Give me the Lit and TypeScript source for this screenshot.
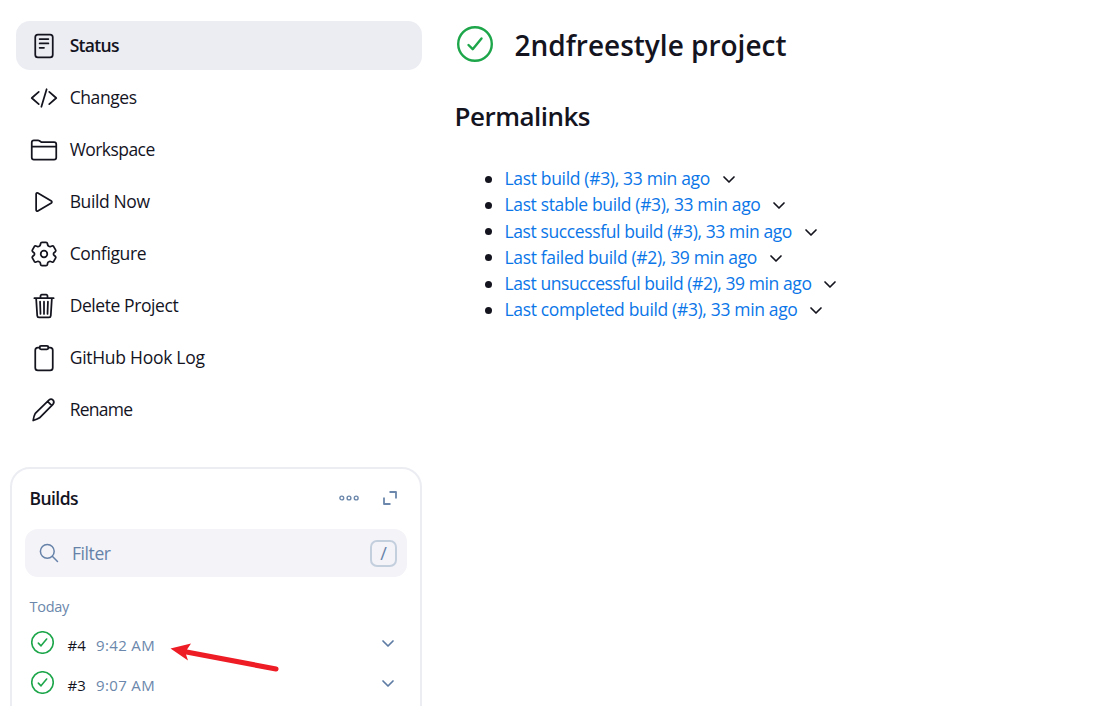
import { LitElement, html, css, svg } from "lit";
import { customElement } from "lit/decorators.js";

const ctx = document.createElement("canvas").getContext("2d")!;
const FAMILY = '"Open Sans", "Noto Sans", sans-serif';

/** Text set to a given advance width through its letter spacing. */
const fit = (text: string, width: number, size: number, weight = 400) => {
  ctx.font = `${weight} ${size}px ${FAMILY}`;
  const spacing = (width - ctx.measureText(text).width) / text.length;
  return html`<span style="letter-spacing:${spacing.toFixed(3)}px">${text}</span>`;
};

const icons = {
  status: svg`<rect x="96" y="48" width="320" height="416" rx="48"/><path d="M176 128h160M176 208h160M176 288h80"/>`,
  changes: svg`<path d="M160 368L32 256l128-112M352 368l128-112-128-112M304 96l-96 320"/>`,
  folder: svg`<path d="M440 432H72a40 40 0 01-40-40V120a40 40 0 0140-40h75.89a40 40 0 0122.19 6.72l27.84 18.56a40 40 0 0022.19 6.72H440a40 40 0 0140 40v240a40 40 0 01-40 40zM32 192h448"/>`,
  play: svg`<path d="M112 111v290c0 17.44 17 28.52 31 20.16l247.9-148.37c12.12-7.25 12.12-26.33 0-33.58L143 90.84c-14-8.36-31 2.72-31 20.16z"/>`,
  gear: svg`<circle cx="256" cy="256" r="60"/><path d="M220 42h72q22 0 26 20l4 26q4 18 22 27q17 10 34 3l24-9q20-7 31 11l34 60q11 20-5 34l-18 15q-15 11-15 27t15 27l18 15q16 14 5 34l-34 60q-11 18-31 11l-24-9q-17-7-34 3q-18 9-22 27l-4 26q-4 20-26 20h-72q-22 0-26-20l-4-26q-4-18-22-27q-17-10-34-3l-24 9q-20 7-31-11l-34-60q-11-20 5-34l18-15q15-11 15-27t-15-27l-18-15q-16-14-5-34l34-60q11-18 31-11l24 9q17 7 34-3q18-9 22-27l4-26q4-20 26-20z"/>`,
  trash: svg`<path d="M112 112l20 320c.95 18.49 14.4 32 32 32h184c17.67 0 30.87-13.51 32-32l20-320M80 112h352M192 112V72a23.93 23.93 0 0124-24h80a23.93 23.93 0 0124 24v40M256 176v224M184 176l8 224M328 176l-8 224"/>`,
  clipboard: svg`<path d="M336 64h32a48 48 0 0148 48v320a48 48 0 01-48 48H144a48 48 0 01-48-48V112a48 48 0 0148-48h32"/><rect x="176" y="32" width="160" height="64" rx="26"/>`,
  pencil: svg`<path d="M58 448q12-84 34-122q6-10 14-18L345 76q40-34 76-2q32 38-2 78L184 390q-8 8-18 14q-36 22-108 44zM322 98l76 76"/>`,
};

const tasks: [keyof typeof icons, string, number][] = [
  ["status", "Status", 49],
  ["changes", "Changes", 67],
  ["folder", "Workspace", 85],
  ["play", "Build Now", 80],
  ["gear", "Configure", 76.5],
  ["trash", "Delete Project", 108.5],
  ["clipboard", "GitHub Hook Log", 135],
  ["pencil", "Rename", 62.5],
];

const permalinks: [string, number][] = [
  ["Last build (#3), 33 min ago", 205.5],
  ["Last stable build (#3), 33 min ago", 256],
  ["Last successful build (#3), 33 min ago", 287.5],
  ["Last failed build (#2), 39 min ago", 252.5],
  ["Last unsuccessful build (#2), 39 min ago", 307],
  ["Last completed build (#3), 33 min ago", 293],
];

const builds = [
  ["#4", "9:42 AM"],
  ["#3", "9:07 AM"],
];

const check = html`<svg class="check" viewBox="0 0 36 36"><circle cx="18" cy="18" r="16.8"/><path d="M11.5 19l4.2 4.2L24.5 12.5"/></svg>`;
const chevron = html`<svg class="chevron" viewBox="0 0 14 9"><path d="M2 2l5 5 5-5"/></svg>`;

@customElement("app-root")
export class AppRoot extends LitElement {
  static styles = css`
    :host { display: flex; height: 706px; overflow: hidden; background: #fff; color: #14141f;
      font: 17.5px/24px "Open Sans", "Noto Sans", sans-serif; position: relative; }
    * { box-sizing: border-box; }
    svg { display: block; flex: none; fill: none; stroke: currentColor; stroke-linecap: round; stroke-linejoin: round; }
    span { white-space: pre; }
    .side { width: 422px; flex: none; padding: 21px 0 0 10px; }
    .tasks { display: flex; flex-direction: column; gap: 3px; padding-left: 6px; }
    .task { height: 49px; padding: 11px 0 0 13.7px; display: flex; gap: 12px; border-radius: 14px; line-height: 26px; }
    .task svg { width: 28px; height: 28px; stroke-width: 32; }
    .active { background: #ecedf3; font-weight: 600; }
    .card { margin-top: 33px; height: 280px; border: 2px solid #ecedf3; border-radius: 20px; padding: 17px 13px 0; }
    .head { display: flex; align-items: center; height: 24px; padding: 0 10px 0 4.5px; font-weight: 600; }
    .head .dots { width: 20px; height: 8px; margin-left: auto; margin-right: 24px; }
    .expand { width: 14px; height: 14px; stroke-linecap: butt; }
    .muted, .head svg { color: #6b87ab; }
    .filter { margin-top: 19px; height: 48px; background: #f3f3f8; border-radius: 13px; display: flex; align-items: center;
      padding: 0 10px 0 14px; color: #6682a8; }
    .filter .glass { width: 20px; height: 20px; margin-right: 13px; stroke-width: 1.5; }
    .key { margin-left: auto; width: 27px; height: 27px; border: 2px solid #c4cfde; border-radius: 7px;
      font-size: 18px; line-height: 22px; text-align: center; }
    .day { font-size: 14.5px; line-height: 20px; margin: 20px 0 0 4.5px; }
    .build { display: flex; height: 40px; padding: 8px 12px 0 6px; font-size: 15px; line-height: 24px; }
    .list { padding-top: 7px; }
    .build .check { width: 23px; height: 23px; margin-top: -1px; stroke-width: 2.5; }
    .check { color: #1ea64b; }
    .build .num { width: 28.5px; margin: 1px 0 0 13.5px; }
    .build .time { margin-top: 1px; }
    .chevron { width: 14px; height: 9px; stroke-width: 1.7; }
    .build .chevron { margin: 7px 0 0 auto; color: #5d7ba3; }
    .main { padding: 26px 0 0 33px; }
    .title { display: flex; gap: 21.5px; height: 36px; align-items: center; margin-left: 2px; }
    .title .check { width: 36px; height: 36px; stroke-width: 2.4; }
    h1, h2, ul { margin: 0; }
    h1 { font-size: 28px; line-height: 40px; font-weight: 600; padding-top: 1px; }
    h2 { font-size: 26px; line-height: 36px; font-weight: 600; margin: 36px 0 0 -0.5px; }
    ul { list-style: none; padding: 31px 0 0 30.5px; }
    li { display: flex; height: 26.25px; align-items: center; }
    .dot { width: 7px; height: 7px; border-radius: 50%; background: #14141f; margin: 2px 12.5px 0 -0.5px; }
    .link { color: #0b76e8; margin-right: 11.5px; }
    li .chevron { margin-top: 3px; }
    .arrow { position: absolute; left: 160px; top: 635px; width: 130px; height: 45px; stroke: none; fill: #ee1c25; }
  `;

  render() {
    return html`
      <aside class="side">
        <nav class="tasks">
          ${tasks.map(([icon, label, w], i) => html`<div class="task ${i ? "" : "active"}">
            <svg viewBox="0 0 512 512">${icons[icon]}</svg>${fit(label, w, 17.5, i ? 400 : 600)}</div>`)}
        </nav>
        <section class="card">
          <div class="head">
            ${fit("Builds", 48.5, 17.5, 600)}
            <svg class="dots" viewBox="0 0 20 8" stroke-width="1.4"><circle cx="2.8" cy="4" r="1.9"/><circle cx="10" cy="4" r="1.9"/><circle cx="17.2" cy="4" r="1.9"/></svg>
            <svg class="expand" viewBox="0 0 14 14" stroke-width="1.8"><path d="M6.5 1H13v6.5M1 6.5V13h6.5"/></svg>
          </div>
          <div class="filter">
            <svg class="glass" viewBox="0 0 20 20"><circle cx="8.3" cy="8.3" r="6.9"/><path d="M13.3 13.3l5.2 5.2"/></svg>
            ${fit("Filter", 38.5, 17.5)}
            <div class="key">/</div>
          </div>
          <div class="day muted">${fit("Today", 39.5, 14.5)}</div>
          <div class="list">
            ${builds.map(([n, t]) => html`<div class="build">${check}
              <span class="num">${fit(n, 18.5, 15)}</span><span class="time muted">${fit(t, 59, 15)}</span>${chevron}</div>`)}
          </div>
        </section>
      </aside>
      <main class="main">
        <div class="title">${check}<h1>${fit("2ndfreestyle project", 272, 28, 600)}</h1></div>
        <h2>${fit("Permalinks", 135.5, 26, 600)}</h2>
        <ul>
          ${permalinks.map(([label, w]) => html`<li><i class="dot"></i><a class="link">${fit(label, w, 17.5)}</a>${chevron}</li>`)}
        </ul>
      </main>
      <svg class="arrow" viewBox="0 0 130 45"><path d="M10.5 13.5L31 8.5l-4 6 89.5 17a2.5 2.5 0 01-1 5L26 19.5l2 6z"/></svg>
    `;
  }
}
